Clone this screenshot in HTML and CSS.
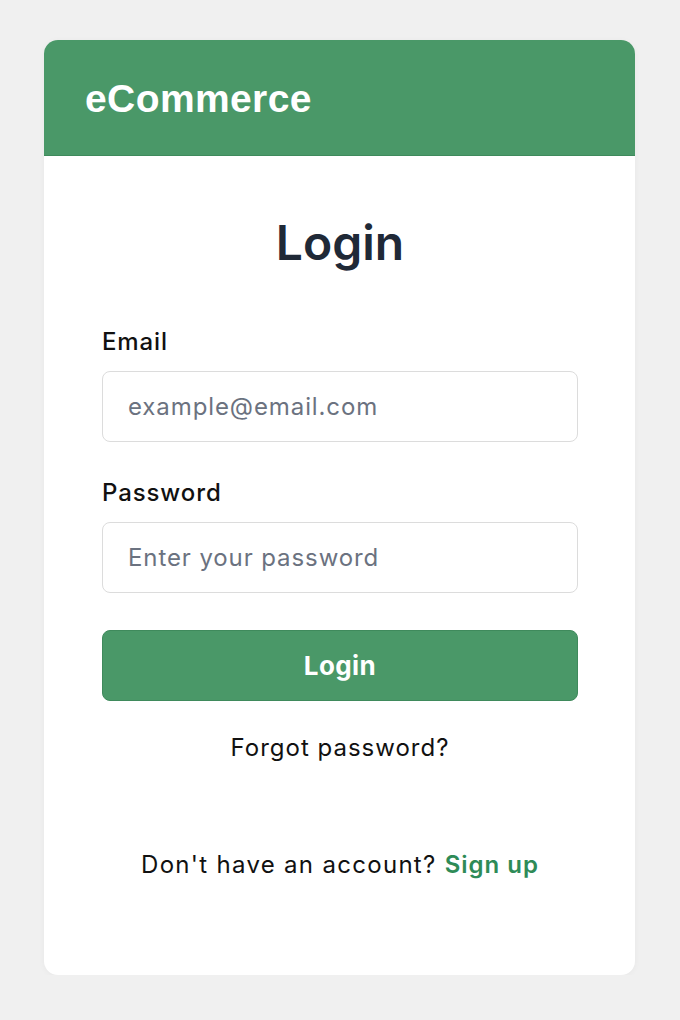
FILE: index.html
```html
<!DOCTYPE html>
<html lang="en">
<head>
<meta charset="utf-8">
<title>eCommerce Login</title>
<link rel="stylesheet" href="styles.css">
</head>
<body>
<div class="card">
  <header class="card-header">
    <h1 class="brand">eCommerce</h1>
  </header>
  <main class="card-body">
    <h2 class="title">Login</h2>
    <form class="form">
      <div class="field">
        <label class="label" for="email">Email</label>
        <input class="input" id="email" type="email" placeholder="example@email.com">
      </div>
      <div class="field">
        <label class="label" for="password">Password</label>
        <input class="input" id="password" type="password" placeholder="Enter your password">
      </div>
      <button class="btn" type="button">Login</button>
    </form>
    <a class="forgot" href="#">Forgot password?</a>
    <p class="signup">Don't have an account? <a class="signup-link" href="#">Sign up</a></p>
  </main>
</div>
</body>
</html>
```

FILE: styles.css
```css
* { box-sizing: border-box; }
html, body { margin: 0; padding: 0; }
body {
  background: #f0f0f0;
  font-family: Inter, "Noto Sans", sans-serif;
  color: #111827;
  padding: 40px 45px 0 44px;
}
.card {
  width: 591px;
  height: 935px;
  background: #ffffff;
  border-radius: 14px;
  overflow: hidden;
  box-shadow: 0 1px 6px rgba(0,0,0,0.04);
}
.card-header {
  background: #4a9868;
  height: 116px;
  display: flex;
  align-items: center;
  padding-left: 41px;
  border-bottom: 1px solid #3f8a5c;
}
.brand {
  margin: 0;
  font-family: "Liberation Sans", Arial, sans-serif;
  font-weight: 700;
  font-size: 39px;
  color: #ffffff;
  letter-spacing: 0.4px;
  padding-top: 2px;
}
.card-body {
  padding: 59px 57px 0 58px;
  display: flex;
  flex-direction: column;
}
.title {
  margin: 0;
  text-align: center;
  font-size: 48px;
  font-weight: 600;
  color: #1f2937;
  line-height: 56px;
}
.form {
  margin-top: 56px;
  display: flex;
  flex-direction: column;
}
.field {
  display: flex;
  flex-direction: column;
  margin-bottom: 36px;
}
.label {
  font-size: 24px;
  font-weight: 500;
  letter-spacing: 0.9px;
  color: #111111;
  line-height: 30px;
  margin-bottom: 14px;
}
.input {
  height: 71px;
  border: 1.5px solid #dcdcdc;
  border-radius: 8px;
  padding: 0 25px;
  font-family: Inter, "Noto Sans", sans-serif;
  font-size: 24px;
  letter-spacing: 0.9px;
  color: #111827;
  background: #fff;
  outline: none;
}
.input::placeholder { color: #6b7280; }
.btn {
  height: 71px;
  border: 1px solid #3f8a5c;
  border-radius: 8px;
  background: #4a9868;
  color: #ffffff;
  font-family: Inter, "Noto Sans", sans-serif;
  font-size: 26px;
  font-weight: 700;
  letter-spacing: 0.4px;
  margin-top: 1px;
}
.forgot {
  align-self: center;
  margin-top: 32px;
  font-size: 24px;
  letter-spacing: 1px;
  color: #111111;
  text-decoration: none;
  line-height: 30px;
}
.signup {
  margin: 87px 0 0;
  text-align: center;
  font-size: 24px;
  letter-spacing: 1.3px;
  color: #111111;
  line-height: 30px;
}
.signup-link {
  color: #2e8b57;
  font-weight: 600;
  letter-spacing: 1px;
  text-decoration: none;
}
```
